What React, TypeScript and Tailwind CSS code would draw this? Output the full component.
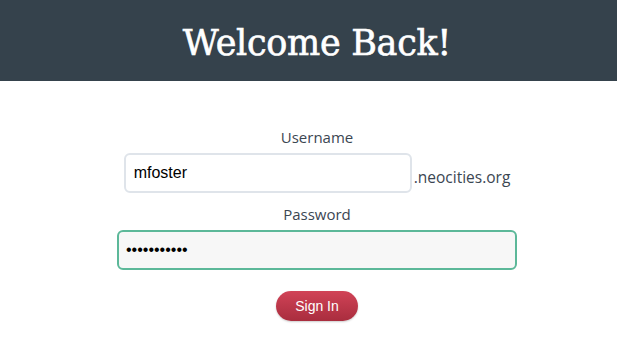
import React from "react";

export default function App() {
  return (
    <div className="w-[617px] h-[348px] bg-white overflow-hidden">
      <div className="h-[81px] bg-[#35424c] flex items-center justify-center">
        <h1 className="text-white text-[35px] leading-none pt-[5px] pl-[17px] font-['DejaVu_Serif',serif] tracking-[-0.3px] [-webkit-text-stroke:0.6px_white]">
          Welcome Back!
        </h1>
      </div>
      <div className="w-[400px] ml-[117px] flex flex-col items-center pt-[46px] font-['Open_Sans',sans-serif]">
        <label className="text-[15px] leading-[20px] text-[#3b4652] mb-[6px]">Username</label>
        <div className="flex items-end">
          <input
            readOnly
            value="mfoster"
            className="w-[288px] h-[40px] border-2 border-[#dfe4ea] rounded-[6px] px-[8px] text-[16px] text-black bg-white outline-none font-['Liberation_Sans',Arial,sans-serif]"
          />
          <span className="ml-[2px] mb-[6px] text-[15.5px] leading-[20px] text-[#3b4652]">.neocities.org</span>
        </div>
        <label className="mt-[11px] text-[15px] leading-[20px] text-[#3b4652] mb-[6px]">Password</label>
        <input
          readOnly
          type="password"
          value="12345678901"
          className="w-[400px] h-[40px] border-2 border-[#5cb899] rounded-[6px] px-[7px] text-[16px] text-black bg-[#f7f7f7] outline-none font-['Liberation_Sans',Arial,sans-serif]"
        />
        <button className="mt-[21px] w-[82px] h-[30px] rounded-full bg-gradient-to-b from-[#d14357] to-[#a92d3e] text-white text-[14px] shadow-[0_1px_2px_rgba(0,0,0,0.2)] font-['Liberation_Sans',Arial,sans-serif]">
          Sign In
        </button>
      </div>
    </div>
  );
}
